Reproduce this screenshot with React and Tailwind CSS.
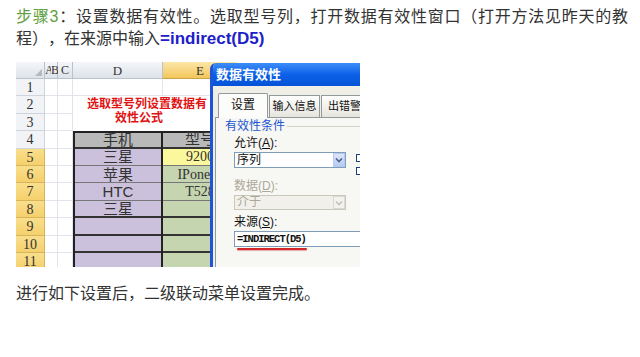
import React from "react";

// Tutorial step: spreadsheet screenshot with the data-validation dialog on top

const SANS = "font-['Liberation_Sans','Noto_Sans_CJK_SC',sans-serif]";
const SERIF = "font-['Liberation_Serif','Noto_Sans_CJK_SC',serif]";

const ROWS = [
  { n: 1 },
  { n: 2, title: true },
  { n: 3, skip: true },
  { n: 4, d: "手机", e: "型号", head: true },
  { n: 5, d: "三星", e: "9200", yellow: true },
  { n: 6, d: "苹果", e: "IPone6s" },
  { n: 7, d: "HTC", e: "T528" },
  { n: 8, d: "三星", dark: true },
  { n: 9, dark: true },
  { n: 10, dark: true },
  { n: 11 },
];

function Chevron({ color = "#4d6185" }) {
  return (
    <svg width="8" height="6" viewBox="0 0 8 6">
      <polyline points="1,1.5 4,4.5 7,1.5" fill="none" stroke={color} strokeWidth="1.6" />
    </svg>
  );
}

function Sheet() {
  return (
    <div className={`grid grid-cols-[29px_6px_7px_15px_90px_74px] grid-rows-[17px_repeat(11,17.4px)] ${SERIF} text-[#333]`}>
      {/* header row */}
      <div className="relative bg-gradient-to-b from-[#f4f6f9] to-[#dde3ea] border-r border-b border-[#b9c3cf]">
        <div className="absolute right-[2px] bottom-[2px] w-0 h-0 border-l-[7px] border-l-transparent border-b-[7px] border-b-[#b4b9c0]" />
      </div>
      <div className="bg-gradient-to-b from-[#f4f6f9] to-[#dde3ea] border-b border-[#b9c3cf] text-[12px] leading-[17px] text-center">A</div>
      <div className="bg-gradient-to-b from-[#f4f6f9] to-[#dde3ea] border-r border-b border-[#b9c3cf] text-[12px] leading-[17px] text-center">B</div>
      <div className="bg-gradient-to-b from-[#f4f6f9] to-[#dde3ea] border-r border-b border-[#b9c3cf] text-[12px] leading-[17px] text-center">C</div>
      <div className="bg-gradient-to-b from-[#f4f6f9] to-[#dde3ea] border-r border-b border-[#b9c3cf] text-[13px] leading-[17px] text-center">D</div>
      <div className="bg-gradient-to-b from-[#fbe7a6] to-[#f4c65a] border-b border-[#c9a24a] text-[13px] leading-[17px] text-center">E</div>

      {ROWS.map((r) => {
        const selRow = r.n >= 5;
        const table = r.n >= 4;
        const lineCol = r.dark || r.head ? "border-[#333]" : "border-[#777]";
        return (
          <React.Fragment key={r.n}>
            <div
              className={`border-r border-b text-[14px] leading-[17px] text-center ${
                selRow
                  ? "bg-gradient-to-b from-[#f9df8c] to-[#f5d06c] border-[#d8b45c]"
                  : "bg-[#f1f3f6] border-[#cfd5dd]"
              }`}
            >
              {r.n}
            </div>
            <div className="border-b border-[#e1e5eb]" />
            <div className="border-r border-b border-[#e1e5eb]" />
            <div className="border-r border-b border-[#e1e5eb]" />
            {r.title && (
              <div className={`col-span-2 row-span-2 pt-[1px] text-[12px] leading-[14px] font-bold text-[#e01414] ${SANS}`}>
                <div className="pl-[14px] whitespace-nowrap">选取型号列设置数据有</div>
                <div className="pl-[42px] whitespace-nowrap">效性公式</div>
              </div>
            )}
            {!r.title && !r.skip && !table && (
              <>
                <div className="border-r border-b border-[#e1e5eb]" />
                <div className="border-r border-b border-[#e1e5eb]" />
              </>
            )}
            {table && (
              <>
                <div
                  className={`border-l-2 border-r-2 border-[#222] ${r.head ? "border-t-2 bg-[#b9b9b9]" : "bg-[#cbc1dc]"} text-center text-[15px] leading-[15px] ${SANS}`}
                >
                  <div className={`h-full flex items-center justify-center border-b ${r.dark || r.head ? "border-b-2" : ""} ${lineCol}`}>{r.d}</div>
                </div>
                <div
                  className={`${r.head ? "border-t-2 border-[#222] bg-[#b9b9b9]" : r.yellow ? "bg-[#fbf79c]" : "bg-[#c5d5b0]"} text-center ${
                    r.head ? "text-[15px]" : "text-[14px]"
                  } leading-[15px]`}
                >
                  <div className={`h-full flex items-center justify-center border-b ${r.dark || r.head ? "border-b-2" : ""} ${lineCol} whitespace-nowrap`}>{r.e}</div>
                </div>
              </>
            )}
          </React.Fragment>
        );
      })}
    </div>
  );
}

function Dialog() {
  return (
    <div className={`absolute left-[194px] top-px bottom-0 w-[170px] bg-[#efeee7] border-l-[3px] border-[#1d54d9] rounded-tl-[6px] overflow-hidden ${SANS}`}>
      <div className="h-[23px] bg-gradient-to-b from-[#3d8df8] via-[#0b61e8] to-[#0654d6] text-white font-bold text-[13px] leading-[23px] pl-[3px] whitespace-nowrap">
        数据有效性
      </div>
      <div className="pl-[2px] pt-[7px]">
        <div className="flex items-end pl-[3px] text-[11px] text-[#111] whitespace-nowrap">
          <div className="relative z-10 w-[50px] h-[25px] -mb-px bg-[#fcfcfb] border border-b-0 border-[#919b9c] rounded-t-[2px] leading-[23px] text-center text-[12px]">
            设置
          </div>
          <div className="w-[51px] h-[22px] ml-[1px] bg-gradient-to-b from-[#fefefe] to-[#e6e5dd] border border-b-0 border-[#919b9c] leading-[21px] text-center">
            输入信息
          </div>
          <div className="w-[51px] h-[22px] ml-[1px] bg-gradient-to-b from-[#fefefe] to-[#e6e5dd] border border-b-0 border-[#919b9c] leading-[21px] pl-[6px]">
            出错警告
          </div>
        </div>
        <div className="h-[160px] bg-[#f7f7f3] border border-[#919b9c] text-[12px] leading-[16px] whitespace-nowrap">
          <div className="flex items-center pl-[9px]">
            <span className="text-[#1c55d0]">有效性条件</span>
            <span className="flex-1 h-px ml-[2px] bg-[#d4d2c6]" />
          </div>
          <div className="pl-[18px] pt-[1px] text-[#111]">
            <div>
              允许(<span className="underline">A</span>):
            </div>
            <div className="flex items-start">
              <div className="w-[112px] h-[16px] mt-px bg-white border border-[#7f9db9] flex items-center justify-between">
                <span className="pl-[2px] leading-[14px]">序列</span>
                <span className="w-[12px] h-[14px] bg-gradient-to-b from-[#dbe6fc] to-[#b7cbf6] border border-[#b6c9f0] flex items-center justify-center">
                  <Chevron />
                </span>
              </div>
              <div className="ml-[10px] flex flex-col gap-[5px] mt-[3px]">
                <span className="w-[10px] h-[8px] border border-[#1c3f7c] bg-white" />
                <span className="w-[10px] h-[8px] border border-[#1c3f7c] bg-white" />
              </div>
            </div>
            <div className="mt-[3px] text-[#aca899]">
              数据(<span className="underline">D</span>):
            </div>
            <div className="w-[112px] h-[15px] mt-px bg-[#f1f0ea] border border-[#cac8bb] flex items-center justify-between">
              <span className="pl-[2px] leading-[13px] text-[#aca899]">介于</span>
              <span className="w-[12px] h-[13px] bg-[#f3f2ed] border border-[#dcdad0] flex items-center justify-center">
                <Chevron color="#c4c3bb" />
              </span>
            </div>
            <div className="mt-[4px]">
              来源(<span className="underline">S</span>):
            </div>
            <div className="h-[16px] mt-px bg-white border border-[#7f9db9] pl-[2px] text-[10.5px] leading-[14px] font-bold tracking-[-1px] font-['Liberation_Mono',monospace] text-[#111]">
              =INDIRECT(D5)
            </div>
            <div className="ml-[3px] mt-[1px] w-[70px] h-[2px] rounded-full bg-[#d42828] shadow-[0_1px_1px_rgba(200,60,60,0.4)]" />
          </div>
        </div>
      </div>
    </div>
  );
}

export default function App() {
  return (
    <div className={`w-[640px] h-[357px] bg-white overflow-hidden ${SANS} text-[#333] [text-spacing-trim:space-all]`}>
      <p className="pl-4 pr-3 pt-[6px] text-[16px] leading-[22px] text-justify">
        <span className="text-[#5f9f3f]">步骤3</span>：设置数据有效性。选取型号列，打开数据有效性窗口（打开方法见昨天的教程）
        <span>，在来源中输入</span>
        <span className="font-bold text-[17px] text-[#2020c8] font-['Liberation_Sans',sans-serif]">=indirect(D5)</span>
      </p>
      <div className="relative ml-4 mt-[12px] w-[344px] h-[205px] overflow-hidden">
        <Sheet />
        <Dialog />
      </div>
      <p className="pl-4 mt-[16px] text-[16px] leading-[22px]">进行如下设置后，二级联动菜单设置完成。</p>
    </div>
  );
}
